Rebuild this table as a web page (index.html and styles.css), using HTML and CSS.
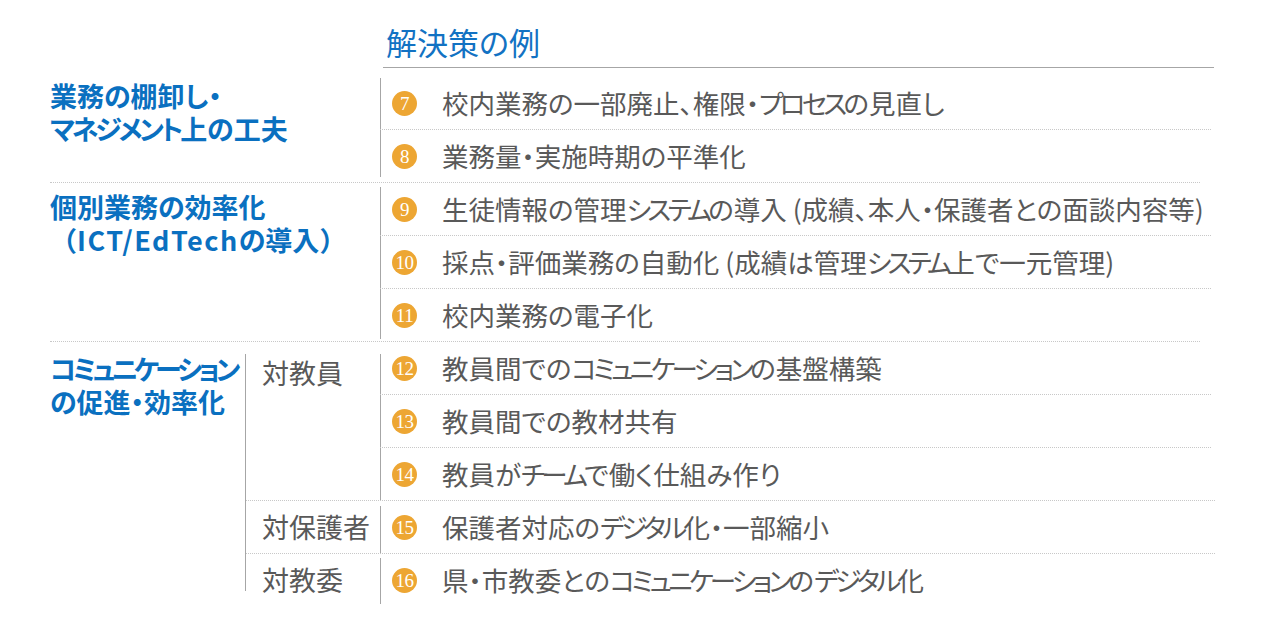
FILE: index.html
```html
<!DOCTYPE html>
<html lang="ja">
<head>
<meta charset="utf-8">
<title>解決策の例</title>
<link rel="stylesheet" href="styles.css">
</head>
<body>
<div class="page">
  <div class="head"><h1 class="title">解決策の例</h1></div>
  <div class="groups">
    <section class="group">
      <div class="cat cat-1">
        <div class="cat-line">業務の棚卸し・</div>
        <div class="cat-line"><span class="kana">マネジメント</span>上の工夫</div>
      </div>
      <div class="items items-g1">
        <div class="item"><span class="num">7</span><span class="txt">校内業務の一部廃止、権限・<span class="kana">プロセス</span>の見直し</span></div>
        <div class="item"><span class="num">8</span><span class="txt">業務量・実施時期の平準化</span></div>
      </div>
    </section>
    <div class="gsep"></div>
    <section class="group">
      <div class="cat cat-2">
        <div class="cat-line">個別業務の効率化</div>
        <div class="cat-line"><span class="fw">（</span><span class="latin">ICT/EdTech</span>の導入<span class="fw">）</span></div>
      </div>
      <div class="items items-g2">
        <div class="item"><span class="num">9</span><span class="txt">生徒情報の管理<span class="kana">システム</span>の導入 (成績、本人・保護者との面談内容等)</span></div>
        <div class="item"><span class="num">10</span><span class="txt">採点・評価業務の自動化 (成績は管理<span class="kana">システム</span>上で一元管理)</span></div>
        <div class="item"><span class="num">11</span><span class="txt">校内業務の電子化</span></div>
      </div>
    </section>
    <div class="gsep"></div>
    <section class="group">
      <div class="cat cat-3">
        <div class="cat-line"><span class="kana kana-tight">コミュニケーション</span></div>
        <div class="cat-line">の促進・効率化</div>
      </div>
      <div class="subs">
        <div class="sub">
          <div class="sub-label sub-label-low">対教員</div>
          <div class="items items-s1">
            <div class="item"><span class="num">12</span><span class="txt">教員間での<span class="kana">コミュニケーション</span>の基盤構築</span></div>
            <div class="item"><span class="num">13</span><span class="txt">教員間での教材共有</span></div>
            <div class="item"><span class="num">14</span><span class="txt">教員が<span class="kana">チーム</span>で働く仕組み作り</span></div>
          </div>
        </div>
        <div class="sub">
          <div class="sub-label">対保護者</div>
          <div class="items items-s2">
            <div class="item"><span class="num">15</span><span class="txt">保護者対応の<span class="kana">デジタル</span>化・一部縮小</span></div>
          </div>
        </div>
        <div class="sub">
          <div class="sub-label">対教委</div>
          <div class="items items-s3">
            <div class="item"><span class="num">16</span><span class="txt">県・市教委との<span class="kana">コミュニケーション</span>の<span class="kana">デジタル</span>化</span></div>
          </div>
        </div>
      </div>
    </section>
  </div>
</div>
</body>
</html>
```

FILE: styles.css
```css
html, body {
  margin: 0;
  padding: 0;
  background: #ffffff;
}

body {
  font-family: "Noto Sans CJK JP", "Noto Sans", sans-serif;
  color: #595959;
}

.page {
  padding: 23px 0 0 50px;
}

.head {
  margin-left: 333px;
  width: 831px;
  border-bottom: 1px solid #a6a6a6;
  padding: 0 0 7px 3px;
  box-sizing: border-box;
}

.title {
  margin: 0;
  font-size: 31px;
  line-height: 37px;
  font-weight: 400;
  color: #1272c3;
  font-feature-settings: "palt";
}

.groups {
  margin-top: 9px;
}

.group {
  display: flex;
}

.cat {
  flex: 0 0 330px;
  font-size: 27px;
  font-weight: 700;
  color: #0a70c0;
  font-feature-settings: "palt";
  white-space: nowrap;
}

.cat-line {
  height: 33px;
  line-height: 33px;
}

.cat .fw {
  font-feature-settings: normal;
}

.cat .latin {
  letter-spacing: 1.5px;
}

.cat .kana {
  letter-spacing: -0.12em;
}

.cat .kana-tight {
  letter-spacing: -0.15em;
}

.cat-1 { padding-top: 2px; }
.cat-2 { padding-top: 7px; }
.cat-3 {
  flex-basis: 195px;
  padding-top: 10px;
}

.gsep {
  width: 1150px;
  height: 0;
  border-top: 1px dotted #c8c8c8;
}

.items {
  flex: 0 0 831px;
  display: flex;
  flex-direction: column;
  --lt: 3px;
  --lb: 3px;
  background-image: linear-gradient(#a6a6a6, #a6a6a6);
  background-repeat: no-repeat;
  background-position: 0 var(--lt);
  background-size: 1px calc(100% - var(--lt) - var(--lb));
}

.items-g1 { --lt: 1px; --lb: 5px; }
.items-g2 { --lt: 4px; --lb: 2px; }
.items-s1 { --lt: 12px; --lb: 0px; }
.items-s2 { --lt: 5px; --lb: 0px; }
.items-s3 { --lt: 4px; --lb: 2px; }

.item {
  height: 52px;
  display: flex;
  align-items: center;
  padding-left: 12px;
  border-bottom: 1px dotted #c8c8c8;
}

.item:last-child {
  border-bottom: none;
}

.num {
  flex: none;
  width: 25px;
  height: 25px;
  border-radius: 50%;
  background: #eda633;
  color: #ffffff;
  font-family: "Liberation Serif", "DejaVu Serif", serif;
  font-size: 19px;
  line-height: 25px;
  letter-spacing: -0.5px;
  display: flex;
  align-items: center;
  justify-content: center;
  margin-right: 25px;
  white-space: nowrap;
}

.txt {
  font-size: 26.5px;
  line-height: 32px;
  color: #595959;
  font-feature-settings: "palt";
  white-space: nowrap;
}

.txt .kana {
  letter-spacing: -0.14em;
}

.subs {
  display: flex;
  flex-direction: column;
  padding-left: 1px;
  background-image: linear-gradient(#a6a6a6, #a6a6a6);
  background-repeat: no-repeat;
  background-position: 0 12px;
  background-size: 1px calc(100% - 27px);
}

.sub {
  display: flex;
  width: 969px;
  border-bottom: 1px dotted #c8c8c8;
}

.sub:last-child {
  border-bottom: none;
}

.sub-label {
  flex: 0 0 134px;
  box-sizing: border-box;
  padding-left: 16px;
  font-size: 27px;
  line-height: 52px;
  color: #595959;
  white-space: nowrap;
}

.sub-label-low {
  padding-top: 5px;
}
```
